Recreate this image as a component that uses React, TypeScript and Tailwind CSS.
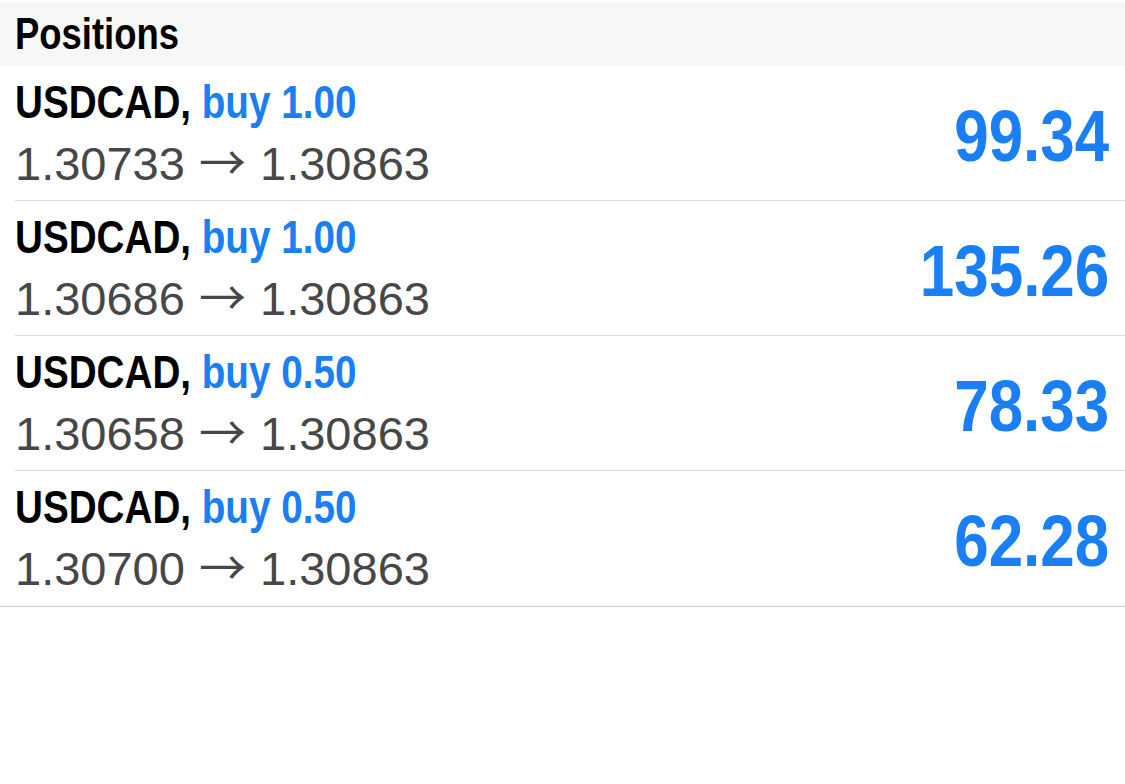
const positions = [
  { symbol: "USDCAD", side: "buy", volume: "1.00", open: "1.30733", current: "1.30863", profit: "99.34" },
  { symbol: "USDCAD", side: "buy", volume: "1.00", open: "1.30686", current: "1.30863", profit: "135.26" },
  { symbol: "USDCAD", side: "buy", volume: "0.50", open: "1.30658", current: "1.30863", profit: "78.33" },
  { symbol: "USDCAD", side: "buy", volume: "0.50", open: "1.30700", current: "1.30863", profit: "62.28" },
];

// no condensed face installed, so bold text is squeezed horizontally
const bold = "font-['Liberation_Sans',Arial,sans-serif] font-bold";

function PositionRow({ p, last }: { p: (typeof positions)[number]; last: boolean }) {
  return (
    <div className={last ? "border-b border-[#cfcfcf] pl-[15px]" : "pl-[15px]"}>
      <div className={last ? "flex h-[135px] pr-[16px]" : "flex h-[135px] border-b border-[#dadada] pr-[16px]"}>
        <div className="flex flex-1 flex-col pt-[10px]">
          <div className={`${bold} origin-left scale-x-[0.84] whitespace-nowrap text-[46px] leading-[52px] text-black`}>
            {p.symbol}, <span className="text-[#1a7ef4]">{p.side} {p.volume}</span>
          </div>
          <div className="mt-[10px] whitespace-nowrap font-['Liberation_Sans',sans-serif] text-[47px] leading-[52px] text-[#474747]">
            {p.open}{" "}
            <span className="mx-[1px] font-['Noto_Sans_CJK_JP',sans-serif] leading-[0px]">→</span>{" "}
            {p.current}
          </div>
        </div>
        <div className={`${bold} mt-[34px] origin-right scale-x-[0.86] self-start text-[72px] leading-[72px] text-[#1a7ef4]`}>
          {p.profit}
        </div>
      </div>
    </div>
  );
}

export default function App() {
  return (
    <div className="h-[784px] w-[1125px] overflow-hidden bg-white pt-[2px]">
      <div className="h-[64px] bg-[#f7f7f7] pl-[15px]">
        <div className={`${bold} origin-left scale-x-[0.81] text-[45px] leading-[64px] text-black`}>
          Positions
        </div>
      </div>
      <div>
        {positions.map((p, i) => (
          <PositionRow key={i} p={p} last={i === positions.length - 1} />
        ))}
      </div>
    </div>
  );
}
